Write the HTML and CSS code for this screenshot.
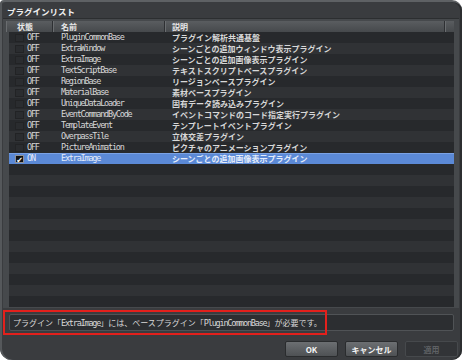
FILE: index.html
```html
<!DOCTYPE html>
<html lang="ja">
<head>
  <meta charset="UTF-8">
  <title>プラグインリスト</title>
  <link rel="stylesheet" href="styles.css">
</head>
<body>
  <div class="window">
    <div class="title">プラグインリスト</div>

    <div class="frame">
      <div class="head">
        <div class="hc c1">状態</div>
        <div class="hc c2">名前</div>
        <div class="hc c3">説明</div>
        <div class="hc corner"></div>
      </div>
      <div class="rows">
        <div class="row"><div class="cell c1"><i class="box"></i><span class="mono">OFF</span></div><div class="cell c2 mono">PluginCommonBase</div><div class="cell c3">プラグイン解析共通基盤</div></div>
        <div class="row"><div class="cell c1"><i class="box"></i><span class="mono">OFF</span></div><div class="cell c2 mono">ExtraWindow</div><div class="cell c3">シーンごとの追加ウィンドウ表示プラグイン</div></div>
        <div class="row"><div class="cell c1"><i class="box"></i><span class="mono">OFF</span></div><div class="cell c2 mono">ExtraImage</div><div class="cell c3">シーンごとの追加画像表示プラグイン</div></div>
        <div class="row"><div class="cell c1"><i class="box"></i><span class="mono">OFF</span></div><div class="cell c2 mono">TextScriptBase</div><div class="cell c3">テキストスクリプトベースプラグイン</div></div>
        <div class="row"><div class="cell c1"><i class="box"></i><span class="mono">OFF</span></div><div class="cell c2 mono">RegionBase</div><div class="cell c3">リージョンベースプラグイン</div></div>
        <div class="row"><div class="cell c1"><i class="box"></i><span class="mono">OFF</span></div><div class="cell c2 mono">MaterialBase</div><div class="cell c3">素材ベースプラグイン</div></div>
        <div class="row"><div class="cell c1"><i class="box"></i><span class="mono">OFF</span></div><div class="cell c2 mono">UniqueDataLoader</div><div class="cell c3">固有データ読み込みプラグイン</div></div>
        <div class="row"><div class="cell c1"><i class="box"></i><span class="mono">OFF</span></div><div class="cell c2 mono">EventCommandByCode</div><div class="cell c3">イベントコマンドのコード指定実行プラグイン</div></div>
        <div class="row"><div class="cell c1"><i class="box"></i><span class="mono">OFF</span></div><div class="cell c2 mono">TemplateEvent</div><div class="cell c3">テンプレートイベントプラグイン</div></div>
        <div class="row"><div class="cell c1"><i class="box"></i><span class="mono">OFF</span></div><div class="cell c2 mono">OverpassTile</div><div class="cell c3">立体交差プラグイン</div></div>
        <div class="row"><div class="cell c1"><i class="box"></i><span class="mono">OFF</span></div><div class="cell c2 mono">PictureAnimation</div><div class="cell c3">ピクチャのアニメーションプラグイン</div></div>
        <div class="row selected"><div class="cell c1"><i class="box checked">&#10004;</i><span class="mono">ON</span></div><div class="cell c2 mono">ExtraImage</div><div class="cell c3">シーンごとの追加画像表示プラグイン</div></div>
        <div class="row"></div>
        <div class="row"></div>
        <div class="row"></div>
        <div class="row"></div>
        <div class="row"></div>
        <div class="row"></div>
        <div class="row"></div>
        <div class="row"></div>
        <div class="row"></div>
        <div class="row"></div>
        <div class="row"></div>
        <div class="row"></div>
        <div class="row"></div>
      </div>
    </div>

    <div class="msg">プラグイン「<span class="mono">ExtraImage</span>」には、ベースプラグイン「<span class="mono">PluginCommonBase</span>」が必要です。</div>

    <div class="buttons">
      <div class="btn">OK</div>
      <div class="btn">キャンセル</div>
      <div class="btn disabled">適用</div>
    </div>

    <div class="mark"></div>
  </div>
</body>
</html>
```

FILE: styles.css
```css
* {
  margin: 0;
  padding: 0;
  box-sizing: border-box;
}
body {
  background: #ffffff;
  font-family: "Noto Sans CJK JP", "DejaVu Sans", sans-serif;
  font-size: 8px;
  color: #d8d8d8;
}
.window {
  position: relative;
  width: 462px;
  height: 360px;
  padding: 0 3px;
  background: #3a3c3f;
  border-top: 2px solid #5e6164;
  border-radius: 4px 10px 10px 12px;
  box-shadow: inset 2px 0 0 #55585b, inset -2px 0 0 #2c2e30;
  display: flex;
  flex-direction: column;
}
.title {
  height: 16px;
  padding: 2px 0 0 4px;
  display: flex;
  align-items: center;
  font-weight: bold;
  font-size: 8.5px;
  color: #f2f2f2;
}
.mono {
  font-family: "DejaVu Sans Mono", "Liberation Mono", monospace;
  font-size: 8.5px;
  letter-spacing: -1.2px;
}

/* list frame */
.frame {
  height: 290px;
  padding: 2px 5px 2px 3px;
  background: #46494c;
  border-top: 1px solid #2c2e30;
  display: flex;
  flex-direction: column;
}
.head {
  display: flex;
  height: 11px;
  background: linear-gradient(#5a5d60, #46494c);
}
.hc {
  height: 11px;
  line-height: 11px;
  font-weight: bold;
  color: #e8e8e8;
  border-right: 1px solid #2e3033;
  box-shadow: inset 1px 0 0 #6a6d70;
}
.head .c1 {
  width: 47px;
  padding-left: 11px;
}
.head .c2 {
  width: 112px;
  padding-left: 8px;
}
.head .c3 {
  flex: 1;
  padding-left: 7px;
}
.head .corner {
  width: 9px;
  border-right: 0;
}
.rows {
  margin-left: 3px;
  display: flex;
  flex-direction: column;
}
.row {
  height: 11px;
  display: flex;
  align-items: center;
  background: #303235;
  white-space: nowrap;
}
.row:nth-child(odd) {
  background: #27292c;
}
.row.selected {
  background: #5b89d6;
  box-shadow: inset 0 1px 0 #7aa2e4;
  color: #e4ecfa;
}
.cell {
  line-height: 11px;
  overflow: hidden;
}
.row .c1 {
  width: 44px;
  padding-left: 6px;
  display: flex;
  align-items: center;
  gap: 3px;
}
.row .c2 {
  width: 112px;
  padding-left: 8px;
}
.row .c3 {
  flex: 1;
  padding-left: 7px;
  font-weight: bold;
}
.box {
  width: 9px;
  height: 8px;
  background: #2a2c2f;
  border: 1px solid #222325;
  font-style: normal;
  font-size: 8px;
  line-height: 7px;
  text-align: center;
  color: #ffffff;
}
.box.checked {
  background: #111214;
  border-color: #8e9299;
}

/* message */
.msg {
  margin: 6px 5px 0 6px;
  height: 17px;
  padding-left: 3px;
  display: flex;
  align-items: center;
  background: #2c2e31;
  border: 1px solid #505356;
  border-radius: 2px;
  color: #d8d8d8;
  white-space: nowrap;
}
.mark {
  position: absolute;
  left: 3px;
  top: 308px;
  width: 324px;
  height: 25px;
  border: 2px solid #e3201c;
}

/* buttons */
.buttons {
  margin-top: 10px;
  padding-right: 1px;
  display: flex;
  justify-content: flex-end;
  gap: 7px;
}
.btn {
  width: 53px;
  height: 16px;
  display: flex;
  align-items: center;
  justify-content: center;
  background: linear-gradient(#6c6f72, #4e5154);
  border: 1px solid #2a2c2e;
  border-radius: 2px;
  font-weight: bold;
  color: #f4f4f4;
}
.btn.disabled {
  background: #323437;
  border-color: #46494c;
  color: #5e6164;
}
```
